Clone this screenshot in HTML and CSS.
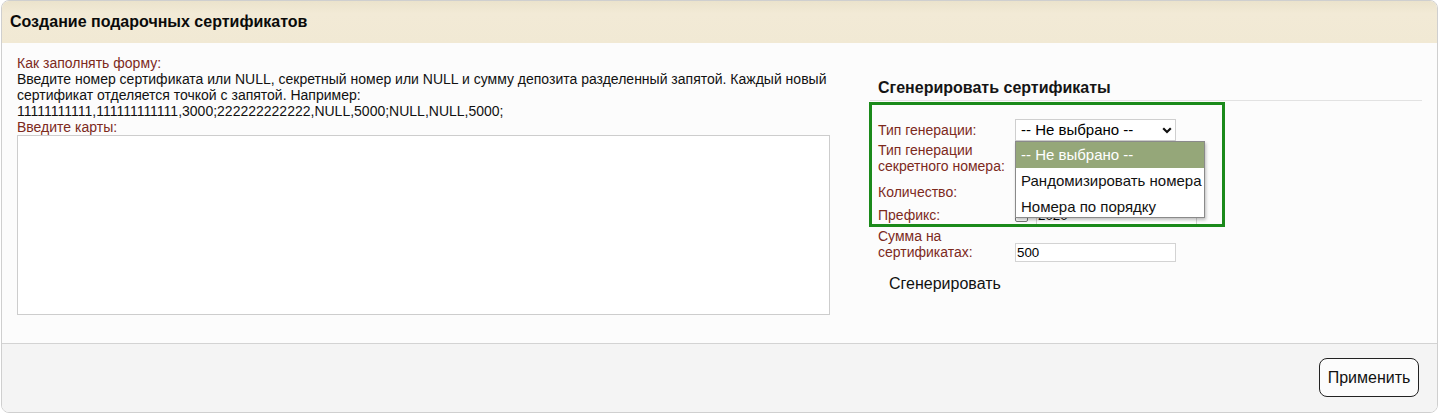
FILE: index.html
```html
<!DOCTYPE html>
<html lang="ru">
<head>
<meta charset="utf-8">
<title>Создание подарочных сертификатов</title>
<link rel="stylesheet" href="styles.css">
</head>
<body>
<div class="panel">
  <div class="panel-header">Создание подарочных сертификатов</div>
  <div class="panel-body">
    <div class="col-left">
      <div class="label">Как заполнять форму:</div>
      <div class="help">Введите номер сертификата или NULL, секретный номер или NULL и сумму депозита разделенный запятой. Каждый новый сертификат отделяется точкой с запятой. Например:<br>11111111111,111111111111,3000;222222222222,NULL,5000;NULL,NULL,5000;</div>
      <div class="label">Введите карты:</div>
      <textarea class="cards"></textarea>
    </div>
    <div class="col-right">
      <div class="gen-title">Сгенерировать сертификаты</div>
      <div class="form">
        <div class="row row-1">
          <div class="label lbl">Тип генерации:</div>
          <div class="select-wrap">
            <div class="select">-- Не выбрано --</div>
            <svg class="chev" width="10" height="7" viewBox="0 0 10 7"><path d="M1.2 1.3 L5 5 L8.8 1.3" fill="none" stroke="#111" stroke-width="2.2"/></svg>
            <div class="dropdown">
              <div class="opt opt-sel">-- Не выбрано --</div>
              <div class="opt">Рандомизировать номера</div>
              <div class="opt">Номера по порядку</div>
            </div>
          </div>
        </div>
        <div class="row row-2">
          <div class="label lbl">Тип генерации секретного номера:</div>
          <div class="select select-hidden"></div>
        </div>
        <div class="row row-3">
          <div class="label lbl">Количество:</div>
          <input class="txt" type="text" value="">
        </div>
        <div class="row row-4">
          <div class="label lbl">Префикс:</div>
          <span class="check"></span>
          <input class="txt" type="text" value="2020">
        </div>
        <div class="row row-5">
          <div class="label lbl">Сумма на сертификатах:</div>
          <input class="txt txt-sum" type="text" value="500">
        </div>
        <button class="gen-btn" type="button">Сгенерировать</button>
        <div class="highlight"></div>
      </div>
    </div>
  </div>
  <div class="panel-footer">
    <button class="apply" type="button">Применить</button>
  </div>
</div>
</body>
</html>
```

FILE: styles.css
```css
* { box-sizing: border-box; }
html, body { margin: 0; padding: 0; background: #ffffff; }
body {
  font-family: "Liberation Sans", Arial, sans-serif;
  font-size: 14px;
  color: #111;
}
.panel {
  margin-left: 1px;
  width: 1437px;
  height: 413px;
  border: 1px solid #cfcfcf;
  border-radius: 8px;
  overflow: hidden;
  display: flex;
  flex-direction: column;
}
.panel-header {
  height: 42px;
  line-height: 42px;
  padding-left: 8px;
  background: linear-gradient(#ebe3cc, #f2ead6 30%, #f1e9d4);
  font-weight: bold;
  font-size: 16px;
  color: #0a0a0a;
}
.panel-body {
  height: 300px;
  background: #fcfcfc;
  padding: 12px 15px 0 15px;
  display: flex;
  gap: 40px;
}
.col-left { width: 813px; line-height: 16px; }
.label { color: #7d2a1c; }
.help { color: #111; }
.cards {
  display: block;
  width: 813px;
  height: 180px;
  margin: 0;
  border: 1px solid #cdcdcd;
  background: #fff;
  resize: none;
  font: inherit;
}
.col-right { flex: 1; position: relative; padding-top: 23px; }
.gen-title {
  font-weight: bold;
  font-size: 16px;
  line-height: 20px;
  padding: 0 0 2px 8px;
  border-bottom: 1px solid #e2e2e2;
  color: #151515;
}
.form { padding-left: 8px; }
.row { display: flex; line-height: 16px; }
.lbl { width: 137px; flex: none; }
.row-1 { margin-top: 18px; height: 22px; align-items: center; }
.row-2 { margin-top: 1px; height: 32px; align-items: center; }
.row-3 { margin-top: 7px; height: 22px; align-items: center; }
.row-4 { margin-top: 1px; height: 22px; align-items: center; }
.row-5 { margin-top: 2px; height: 34px; align-items: flex-start; }
.select-wrap { position: relative; width: 161px; height: 22px; }
.select {
  width: 161px;
  height: 22px;
  border: 1px solid #cfcfcf;
  background: #fff;
  font-size: 15px;
  line-height: 20px;
  padding-left: 5px;
  color: #000;
}
.chev { position: absolute; left: 147px; top: 8px; }
.dropdown {
  position: absolute;
  left: 0;
  top: 22px;
  width: 190px;
  height: 77px;
  background: #fff;
  border: 1px solid #8a8a8a;
  box-shadow: 1px 2px 3px rgba(0,0,0,0.25);
  z-index: 5;
  font-size: 15px;
}
.opt { height: 26px; line-height: 25px; padding-left: 5px; color: #111; white-space: nowrap; }
.opt-sel { background: #95a779; color: #fff; }
.txt {
  width: 161px;
  height: 22px;
  border: 1px solid #d3d3d3;
  background: #fff;
  font-family: "Liberation Sans", Arial, sans-serif;
  font-size: 13.33px;
  padding: 0 1px;
  margin: 0;
  color: #000;
}
.check {
  width: 13px;
  height: 13px;
  border: 1px solid #767676;
  border-radius: 2px;
  background: #fff;
  margin: 0 8px 0 0;
  flex: none;
}
.txt-sum { height: 19px; margin-top: 15px; }
.gen-btn {
  display: block;
  margin-top: 9px;
  padding: 4px 11px;
  border: none;
  background: transparent;
  font-family: "Liberation Sans", Arial, sans-serif;
  font-size: 16px;
  line-height: 18px;
  color: #111;
}
.highlight {
  position: absolute;
  left: -1px;
  top: 47px;
  width: 356px;
  height: 125px;
  border: 3px solid #1b8a1b;
  z-index: 4;
  pointer-events: none;
}
.panel-footer {
  flex: 1;
  background: #f4f4f4;
  border-top: 1px solid #d3d3d3;
  display: flex;
  justify-content: flex-end;
  align-items: flex-start;
  padding: 14px 18px 0 0;
}
.apply {
  width: 100px;
  height: 39px;
  border: 1px solid #222;
  border-radius: 8px;
  background: #fcfcfc;
  font-family: "Liberation Sans", Arial, sans-serif;
  font-size: 16px;
  color: #111;
  padding: 0;
}
```
